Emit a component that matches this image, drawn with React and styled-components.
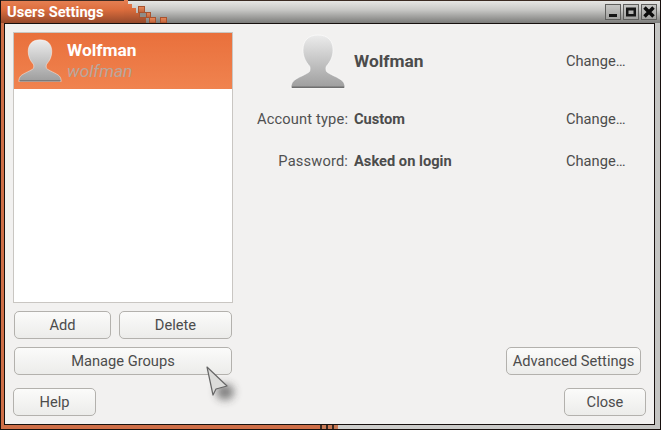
import React from 'react';
import styled, { createGlobalStyle } from 'styled-components';

const GlobalStyle = createGlobalStyle`
  html, body {
    margin: 0;
    padding: 0;
    background: #000;
  }
  body {
    font-family: Roboto, "Liberation Sans", sans-serif;
  }
`;

const Window = styled.div`
  width: 661px;
  height: 430px;
  box-sizing: border-box;
  position: relative;
  overflow: hidden;
  display: flex;
  flex-direction: column;
  padding: 0 1px 1px;
  background: #17100e;
`;

const TitleBar = styled.div`
  height: 23px;
  flex: none;
  position: relative;
  display: flex;
  align-items: center;
  justify-content: space-between;
  padding: 0 3px 0 6px;
  border-top: 1px solid #3a2a22;
  box-sizing: border-box;
  background:
    linear-gradient(180deg, #e57f52 0%, #dc6d3d 40%, #96492b 100%) 0 0 / 124px 100% no-repeat,
    linear-gradient(180deg, #e6e6e4 0%, #c8c8c6 40%, #7c7c7a 100%);
`;

const Title = styled.span`
  font-size: 14.67px;
  font-weight: 700;
  color: #fff;
  position: relative;
`;

const TitlePixels = styled.svg`
  position: absolute;
  left: 123px;
  top: -1px;
`;

const WindowButtons = styled.div`
  display: flex;
  gap: 2px;
  position: relative;
`;

const WindowButton = styled.div`
  width: 16px;
  height: 16px;
  box-sizing: border-box;
  display: flex;
  align-items: center;
  justify-content: center;
  background: linear-gradient(180deg, #c6c6c4, #a2a2a0);
  border: 1px solid #5f5f5d;
`;

const Frame = styled.div`
  flex: 1;
  min-height: 0;
  display: flex;
  padding: 1px 0 0 0;
  background: linear-gradient(
    90deg,
    #cf6f48 0,
    #cf6f48 319px,
    #3a2a22 319px,
    #3a2a22 321px,
    #c97a56 321px,
    #c97a56 325px,
    #3a2a22 325px,
    #3a2a22 327px,
    #c97a56 327px,
    #c97a56 331px,
    #3a2a22 331px,
    #3a2a22 333px,
    #c97a56 333px,
    #c97a56 337px,
    #cfcfcd 337px,
    #c4c4c2 100%
  );
`;

const Body = styled.div`
  flex: 1;
  margin: 0 6px 5px 4px;
  padding: 8px;
  display: flex;
  flex-direction: column;
  background: #f2f1f0;
  outline: 1px solid #17100e;
  box-sizing: border-box;
`;

const Columns = styled.div`
  flex: 1;
  min-height: 0;
  display: flex;
`;

const LeftColumn = styled.div`
  width: 220px;
  display: flex;
  flex-direction: column;
  gap: 8px;
`;

const UserList = styled.div`
  flex: 1;
  background: #fff;
  border: 1px solid #c9c6c2;
`;

const UserRow = styled.div`
  height: 56px;
  display: flex;
  align-items: center;
  gap: 5px;
  padding: 0 0 0 4px;
  background: linear-gradient(180deg, #e9703c, #f0834f);
`;

const UserNames = styled.div`
  display: flex;
  flex-direction: column;
`;

const UserName = styled.span`
  font-size: 17.33px;
  font-weight: 700;
  line-height: 21px;
  color: #fff;
`;

const UserLogin = styled.span`
  font-size: 17.33px;
  font-style: italic;
  line-height: 21px;
  color: #b9a79d;
`;

const ButtonRow = styled.div`
  display: flex;
  gap: 8px;
  margin: 0 1px;
`;

const Button = styled.button`
  flex: ${(p) => (p.$grow ? 1 : 'none')};
  width: ${(p) => (p.$width ? `${p.$width}px` : 'auto')};
  height: 28px;
  padding: 0;
  box-sizing: border-box;
  font-family: inherit;
  font-size: 14.67px;
  color: #4c4c4c;
  background: linear-gradient(180deg, #fbfbfa, #ececea);
  border: 1px solid #b3b1ad;
  border-radius: 5px;
`;

const RightColumn = styled.div`
  flex: 1;
  display: flex;
  flex-direction: column;
  padding: 0 5px 0 24px;
`;

const Details = styled.div`
  display: flex;
  flex-direction: column;
`;

const DetailRow = styled.div`
  height: ${(p) => p.$height}px;
  margin-bottom: ${(p) => p.$gapBelow || 0}px;
  display: flex;
  align-items: center;
  gap: 5px;
`;

const AvatarCell = styled.div`
  width: 92px;
  flex: none;
  display: flex;
  justify-content: flex-end;
  padding: 2px 3px 0 0;
  box-sizing: border-box;
`;

const Label = styled.span`
  width: 92px;
  flex: none;
  box-sizing: border-box;
  padding-right: 1px;
  font-size: 14.67px;
  letter-spacing: 0.15px;
  color: #505050;
  text-align: right;
  white-space: nowrap;
`;

const Value = styled.span`
  flex: 1;
  font-size: 14.67px;
  font-weight: 700;
  color: #4c4c4c;
`;

const HeadName = styled(Value)`
  font-size: 17.33px;
`;

const ChangeLink = styled.span`
  width: 75px;
  flex: none;
  font-size: 14.67px;
  color: #4c4c4c;
`;

const RightActions = styled.div`
  margin-top: auto;
  display: flex;
  justify-content: flex-end;
`;

const Footer = styled.div`
  display: flex;
  justify-content: space-between;
  margin-top: 13px;
`;

const Cursor = styled.svg`
  position: absolute;
  left: 200px;
  top: 360px;
  overflow: visible;
`;

const Avatar = ({ size, id }) => (
  <svg width={size} height={size} viewBox="0 0 56 56">
    <defs>
      <linearGradient id={id} x1="0" y1="0" x2="0" y2="1">
        <stop offset="0" stopColor="#ececec" />
        <stop offset="1" stopColor="#9d9d9d" />
      </linearGradient>
    </defs>
    <path
      d="M28 1c-10 0-15 6-15 15 0 7 3 12 6.500 16 .8 1 .8 4 0 5.500-2 2.500-12.500 6-16 9.500C2 48.500 1 51 1 54h54c0-3-1-5.500-2.500-7-3.500-3.500-14-7-16-9.500-.8-1.500-.8-4.500 0-5.500C40 28 43 23 43 16 43 7 38 1 28 1z"
      fill={`url(#${id})`}
      stroke="#fff"
      strokeOpacity="0.55"
      strokeWidth="1"
    />
    <rect x="2" y="52.500" width="52" height="1.500" fill="#6f6f6f" />
  </svg>
);

const Pixel = ({ x, y, w, h, grey }) => (
  <rect
    x={x}
    y={y}
    width={w}
    height={h}
    fill={grey ? '#8f8c88' : 'url(#pixel-fill)'}
    stroke="#a9532f"
    strokeWidth="1"
  />
);

const App = () => (
  <>
    <GlobalStyle />
    <Window>
      <TitleBar>
        <Title>Users Settings</Title>
        <TitlePixels width="46" height="23" viewBox="0 0 46 23">
          <defs>
            <linearGradient id="pixel-fill" x1="0" y1="0" x2="0" y2="1">
              <stop offset="0" stopColor="#e98a5b" />
              <stop offset="1" stopColor="#c0623a" />
            </linearGradient>
            <linearGradient id="pixel-edge" x1="0" y1="0" x2="0" y2="1">
              <stop offset="0" stopColor="#e57f52" />
              <stop offset="0.4" stopColor="#dc6d3d" />
              <stop offset="1" stopColor="#96492b" />
            </linearGradient>
          </defs>
          <path d="M0 0h4v4h4v4h4v5h4v4h6v6H0z" fill="url(#pixel-edge)" />
          <Pixel x={14.500} y={6.500} w={6} h={6} />
          <Pixel x={15.500} y={12.500} w={7} h={5} grey />
          <Pixel x={22.500} y={12.500} w={4} h={5} />
          <Pixel x={25.500} y={17.500} w={6} h={5.500} />
          <Pixel x={36.500} y={17.500} w={6} h={5.500} />
        </TitlePixels>
        <WindowButtons>
          <WindowButton>
            <svg width="12" height="12" viewBox="0 0 12 12">
              <rect x="2" y="8" width="8" height="3" fill="#161616" />
            </svg>
          </WindowButton>
          <WindowButton>
            <svg width="12" height="12" viewBox="0 0 12 12">
              <path d="M1 1.500h10v9H1zM3.500 4.500v3.500h5V4.500z" fill="#161616" fillRule="evenodd" />
            </svg>
          </WindowButton>
          <WindowButton>
            <svg width="14" height="14" viewBox="0 0 14 14">
              <path d="M2.500 2.500l9 9M11.500 2.500l-9 9" stroke="#0c0c0c" strokeWidth="3.500" />
            </svg>
          </WindowButton>
        </WindowButtons>
      </TitleBar>
      <Frame>
        <Body>
          <Columns>
            <LeftColumn>
              <UserList>
                <UserRow>
                  <Avatar size={44} id="avatar-small" />
                  <UserNames>
                    <UserName>Wolfman</UserName>
                    <UserLogin>wolfman</UserLogin>
                  </UserNames>
                </UserRow>
              </UserList>
              <ButtonRow>
                <Button $width={97}>Add</Button>
                <Button $grow>Delete</Button>
              </ButtonRow>
              <ButtonRow>
                <Button $grow>Manage Groups</Button>
              </ButtonRow>
            </LeftColumn>
            <RightColumn>
              <Details>
                <DetailRow $height={58} $gapBelow={8}>
                  <AvatarCell>
                    <Avatar size={56} id="avatar-large" />
                  </AvatarCell>
                  <HeadName>Wolfman</HeadName>
                  <ChangeLink>Change…</ChangeLink>
                </DetailRow>
                <DetailRow $height={42}>
                  <Label>Account type:</Label>
                  <Value>Custom</Value>
                  <ChangeLink>Change…</ChangeLink>
                </DetailRow>
                <DetailRow $height={42}>
                  <Label>Password:</Label>
                  <Value>Asked on login</Value>
                  <ChangeLink>Change…</ChangeLink>
                </DetailRow>
              </Details>
              <RightActions>
                <Button $width={135}>Advanced Settings</Button>
              </RightActions>
            </RightColumn>
          </Columns>
          <Footer>
            <Button $width={83}>Help</Button>
            <Button $width={82}>Close</Button>
          </Footer>
        </Body>
      </Frame>
      <Cursor width="26" height="36" viewBox="0 0 26 36">
        <defs>
          <filter id="cursor-shadow" x="-100%" y="-100%" width="300%" height="300%">
            <feGaussianBlur stdDeviation="4.500" />
          </filter>
        </defs>
        <ellipse cx="25" cy="32" rx="9" ry="8" fill="#333" opacity="0.6" filter="url(#cursor-shadow)" />
        <path d="M7 7l20 19-11 3-3 6z" fill="#dcdcda" stroke="#666" strokeWidth="1.200" strokeLinejoin="round" />
      </Cursor>
    </Window>
  </>
);

export default App;
